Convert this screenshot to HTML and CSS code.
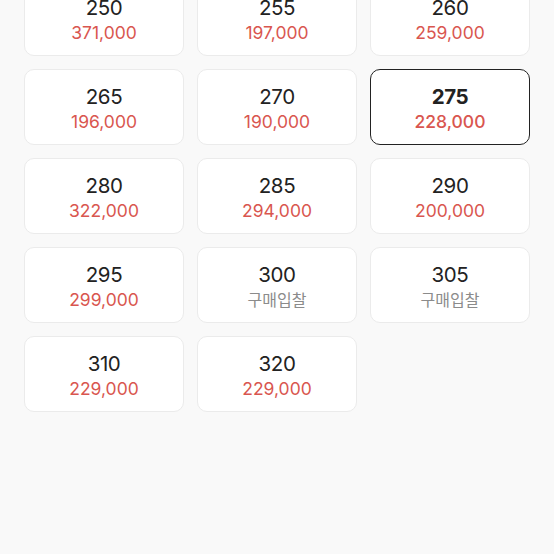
FILE: index.html
```html
<!DOCTYPE html>
<html>
	<head>
		<title>Sizes</title>
		<link rel="stylesheet" href="styles.css">
	</head>
	<body>
		<div class="size-grid">
			<div class="size-card"><div class="size">250</div><div class="price">371,000</div></div>
			<div class="size-card"><div class="size">255</div><div class="price">197,000</div></div>
			<div class="size-card"><div class="size">260</div><div class="price">259,000</div></div>
			<div class="size-card"><div class="size">265</div><div class="price">196,000</div></div>
			<div class="size-card"><div class="size">270</div><div class="price">190,000</div></div>
			<div class="size-card selected"><div class="size">275</div><div class="price">228,000</div></div>
			<div class="size-card"><div class="size">280</div><div class="price">322,000</div></div>
			<div class="size-card"><div class="size">285</div><div class="price">294,000</div></div>
			<div class="size-card"><div class="size">290</div><div class="price">200,000</div></div>
			<div class="size-card"><div class="size">295</div><div class="price">299,000</div></div>
			<div class="size-card"><div class="size">300</div><div class="price empty">구매입찰</div></div>
			<div class="size-card"><div class="size">305</div><div class="price empty">구매입찰</div></div>
			<div class="size-card"><div class="size">310</div><div class="price">229,000</div></div>
			<div class="size-card"><div class="size">320</div><div class="price">229,000</div></div>
		</div>
	</body>
</html>
```

FILE: styles.css
```css
html,
body {
	margin: 0;
	height: 100%;
	background-color: #f9f9f9;
	font-family: Inter, "Noto Sans CJK KR", sans-serif;
	overflow: hidden;
}

.size-grid {
	display: grid;
	grid-template-columns: repeat(3, 160px);
	grid-auto-rows: 76px;
	gap: 13px;
	padding: 0 24px;
	margin-top: -20px;
}

.size-card {
	box-sizing: border-box;
	background-color: #fff;
	border: 1px solid #ebebeb;
	border-radius: 10px;
	display: flex;
	flex-direction: column;
	align-items: center;
	padding-top: 15px;
	gap: 3px;
}

.size-card.selected {
	border: 1.5px solid #222;
	padding-top: 14.5px;
}

.size {
	font-size: 20.5px;
	letter-spacing: -0.4px;
	color: #222;
	line-height: 24px;
}

.selected .size {
	font-weight: 700;
}

.price {
	font-size: 17.5px;
	color: #d9564f;
	line-height: 20px;
}

.selected .price {
	font-weight: 500;
}

.price.empty {
	color: #8b8b8b;
	font-size: 16px;
}
```
